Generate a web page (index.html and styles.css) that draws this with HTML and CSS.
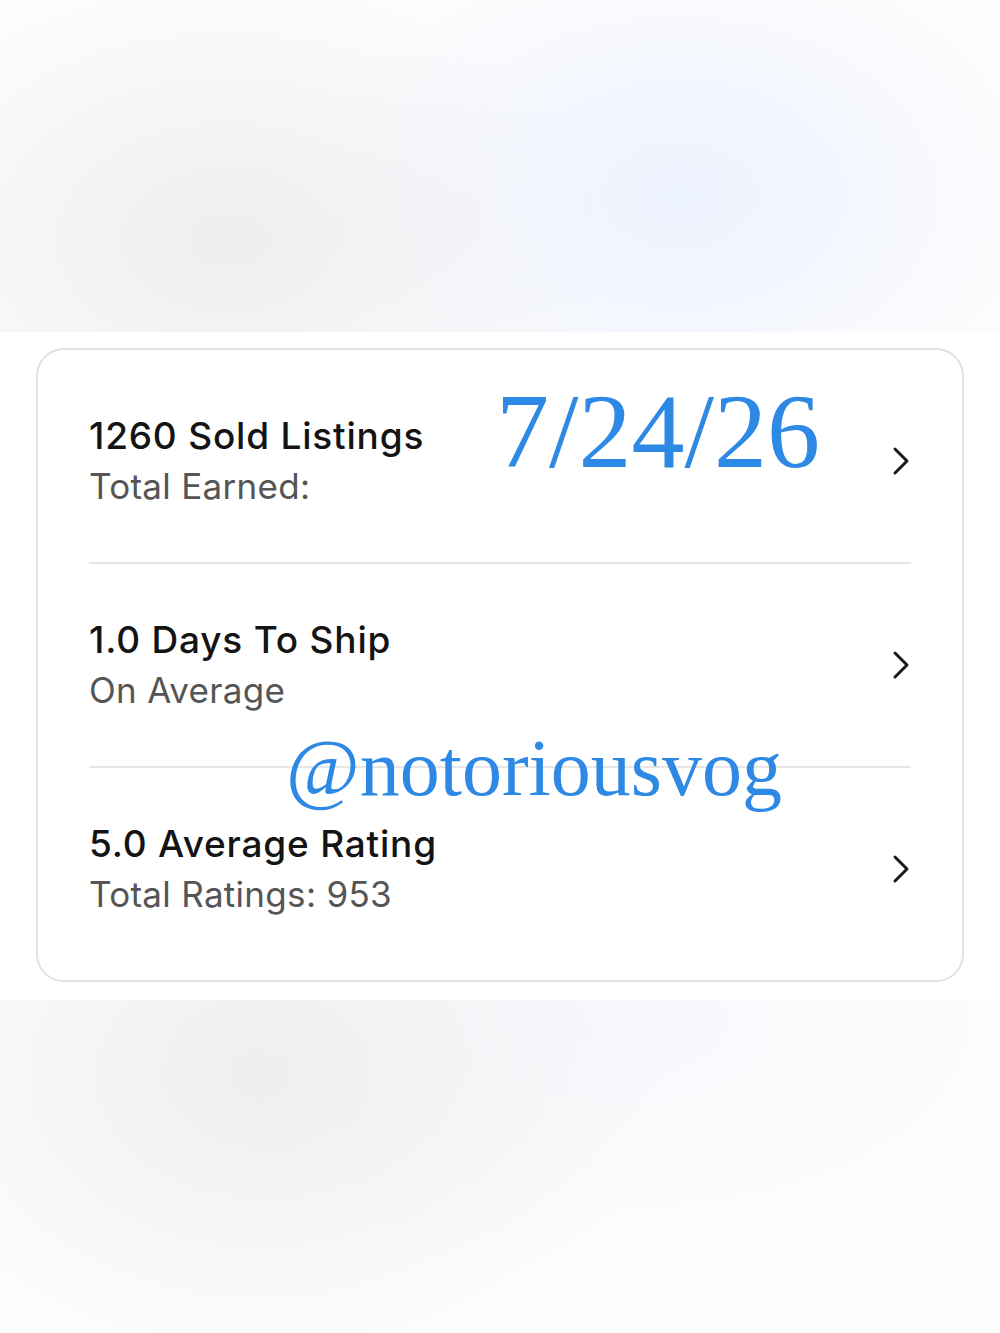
FILE: index.html
```html
<!DOCTYPE html>
<html lang="en">
<head>
    <meta charset="UTF-8">
    <meta name="viewport" content="width=device-width, initial-scale=1.0">
    <title>Shop Stats</title>
    <link rel="stylesheet" href="styles.css">
</head>
<body>
    <div class="backdrop backdrop-top"></div>
    <div class="sheet">
        <div class="card">
            <div class="row">
                <div class="text">
                    <div class="title">1260 Sold Listings</div>
                    <div class="subtitle">Total Earned: <span class="hidden-value"></span></div>
                </div>
                <svg class="chevron" viewBox="0 0 20 32"><path d="M4 4 L16 16 L4 28"/></svg>
            </div>
            <div class="row">
                <div class="text">
                    <div class="title">1.0 Days To Ship</div>
                    <div class="subtitle">On Average</div>
                </div>
                <svg class="chevron" viewBox="0 0 20 32"><path d="M4 4 L16 16 L4 28"/></svg>
            </div>
            <div class="row">
                <div class="text">
                    <div class="title">5.0 Average Rating</div>
                    <div class="subtitle">Total Ratings: 953</div>
                </div>
                <svg class="chevron" viewBox="0 0 20 32"><path d="M4 4 L16 16 L4 28"/></svg>
            </div>
        </div>
        <div class="stamp stamp-date">7/24/26</div>
        <div class="stamp stamp-handle">@notoriousvog</div>
    </div>
    <div class="backdrop backdrop-bottom"></div>
</body>
</html>
```

FILE: styles.css
```css
body {
    margin: 0;
    padding: 0;
    background-color: #ffffff;
    font-family: 'Inter', 'Noto Sans', sans-serif;
}
.backdrop {
    width: 100%;
}
.backdrop-top {
    height: 332px;
    background:
        radial-gradient(ellipse 380px 260px at 230px 240px, rgba(236, 236, 238, 0.9), rgba(236, 236, 238, 0) 100%),
        radial-gradient(ellipse 360px 250px at 680px 195px, rgba(236, 242, 255, 1), rgba(236, 242, 255, 0) 100%),
        #fcfcfd;
}
.backdrop-bottom {
    height: 333px;
    background:
        radial-gradient(ellipse 400px 300px at 260px 75px, rgba(238, 238, 241, 1), rgba(242, 242, 245, 0) 100%),
        radial-gradient(ellipse 480px 260px at 620px 20px, rgba(247, 248, 252, 1), rgba(247, 248, 252, 0) 100%),
        #fdfdfd;
}
.sheet {
    position: relative;
    padding: 16px 36px 18px;
    background-color: #ffffff;
}
.card {
    border: 2px solid #e2e2e2;
    border-radius: 28px;
    padding: 10px 51px;
    background-color: #ffffff;
}
.row {
    display: flex;
    align-items: center;
    justify-content: space-between;
    height: 202px;
    border-bottom: 2px solid #e6e6e6;
}
.row:last-child {
    border-bottom: none;
}
.title {
    font-size: 37px;
    font-weight: 500;
    color: #141414;
    line-height: 51px;
    letter-spacing: 0.8px;
}
.subtitle {
    font-size: 35px;
    color: #555555;
    line-height: 51px;
    letter-spacing: 0.3px;
}
.hidden-value {
    display: inline-block;
    width: 180px;
    height: 20px;
}
.chevron {
    width: 20px;
    height: 32px;
    fill: none;
    stroke: #1a1a1a;
    stroke-width: 3;
    stroke-linecap: round;
    stroke-linejoin: round;
}
.stamp {
    position: absolute;
    font-family: 'Liberation Serif', serif;
    color: #2e89e5;
    white-space: nowrap;
    line-height: 1;
}
.stamp-date {
    left: 496px;
    top: 47px;
    font-size: 106px;
}
.stamp-handle {
    left: 286px;
    top: 396px;
    font-size: 80px;
}
```
